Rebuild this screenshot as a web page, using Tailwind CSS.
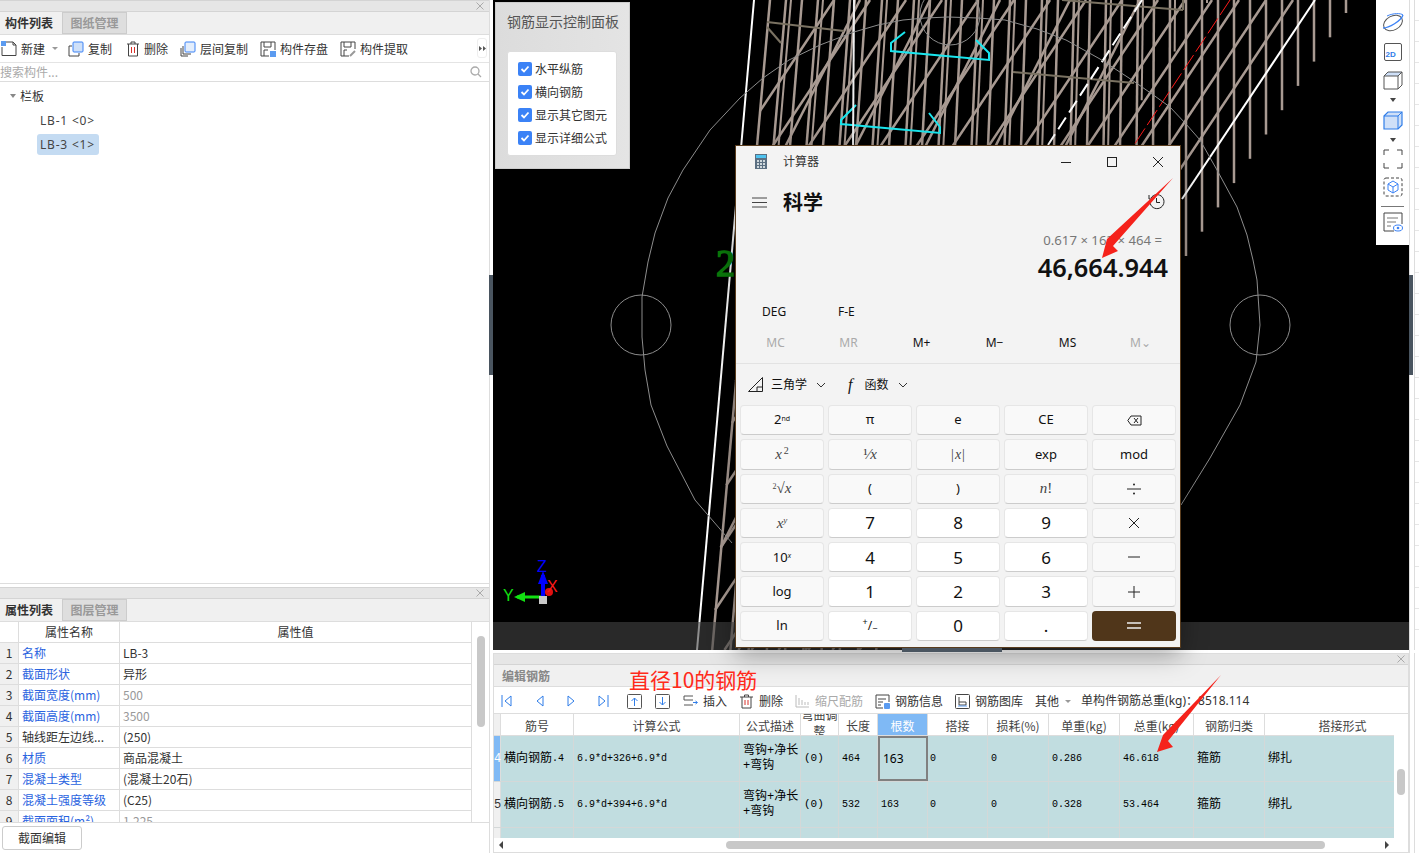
<!DOCTYPE html>
<html lang="zh">
<head>
  <meta charset="UTF-8" />
  <meta name="viewport" content="width=device-width, initial-scale=1.0" />
  <title>钢筋</title>
  <script src="https://cdn.jsdelivr.net/npm/@tailwindcss/browser@4"></script>
</head>
<body class="bg-white text-[#333] text-[12px] font-['Noto_Sans_CJK_SC',sans-serif]">
<div class="relative w-[1419px] h-[853px] overflow-hidden flex">

  <!-- left column -->
  <div class="w-[490px] h-full flex flex-col shrink-0 border-r border-[#ddd]">
    <div class="h-[584px] flex flex-col border-b border-[#ddd] shrink-0">
      <div class="h-[12px] bg-[#e6e6e6] border-y border-[#d4d4d4] flex items-center justify-end pr-[5px] shrink-0"><svg width="8" height="8" viewBox="0 0 8 8" fill="none"><path d="M0.500 0.500L7.500 7.500M7.500 0.500L0.500 7.500" stroke="#aaa"/></svg></div>
      <div class="h-[23px] bg-[#f0f0f0] border-b border-[#ddd] flex shrink-0">
        <div class="w-[62px] flex items-center pl-[5px] font-bold text-[12px]">构件列表</div>
        <div class="w-[65px] flex items-center justify-center bg-[#dedede] border border-[#ccc] text-[#999] font-bold">图纸管理</div>
      </div>
      <div class="h-[28px] border-b border-[#e4e4e4] flex items-center relative shrink-0">
        <svg class="ml-px" width="16" height="16" viewBox="0 0 16 16" fill="none"><path d="M1 6V14.500H15V4L12 1H5" stroke="#444"/><path d="M12 1V4H15" stroke="#444"/><rect x="0" y="0" width="5" height="5" fill="#5b9bf0"/></svg>
        <span class="ml-[4px]">新建</span>
        <span class="ml-[7px] w-0 h-0 border-x-[3px] border-x-transparent border-t-[3px] border-t-[#999]"></span>
        <svg class="ml-[10px]" width="16" height="16" viewBox="0 0 16 16" fill="none"><path d="M4 5H1V15H11V12" stroke="#444"/><rect x="5" y="1" width="10" height="10" rx="1" fill="#cfe0f8" stroke="#3b82f6"/></svg>
        <span class="ml-[4px]">复制</span>
        <svg class="ml-[14px]" width="14" height="16" viewBox="0 0 14 16" fill="none"><path d="M1 3H13M5 3V1H9V3M2.500 3V15H11.500V3" stroke="#444"/><path d="M5.500 6V12M8.500 6V12" stroke="#d8312a"/></svg>
        <span class="ml-[4px]">删除</span>
        <svg class="ml-[12px]" width="16" height="16" viewBox="0 0 16 16" fill="none"><path d="M1 7V15H8M3 5V13H11" stroke="#444"/><rect x="5" y="1" width="10" height="10" rx="1" fill="#e4eefc" stroke="#3b82f6"/></svg>
        <span class="ml-[4px]">层间复制</span>
        <svg class="ml-[12px]" width="16" height="16" viewBox="0 0 16 16" fill="none"><path d="M9 15H1V1H15V9" stroke="#444"/><path d="M4 1V6H11V1M4 15V9H8" stroke="#444"/><rect x="10" y="10" width="6" height="6" fill="#5b9bf0"/></svg>
        <span class="ml-[4px]">构件存盘</span>
        <svg class="ml-[12px]" width="16" height="16" viewBox="0 0 16 16" fill="none"><path d="M9 15H1V1H15V8" stroke="#444"/><path d="M4 1V6H11V1M4 15V9H7" stroke="#444"/><path d="M10 15L15 10" stroke="#999" stroke-width="2"/></svg>
        <span class="ml-[4px]">构件提取</span>
        <span class="absolute right-[2px] top-[3px] w-[10px] h-[20px] border border-[#eee] rounded-[3px] flex items-center justify-center"><svg width="7" height="5" viewBox="0 0 7 5"><path d="M0 0L3 2.500L0 5ZM4 0L7 2.500L4 5Z" fill="#555"/></svg></span>
      </div>
      <div class="h-[19px] border-b border-[#ddd] flex items-center justify-between pr-[7px] text-[#aaa] shrink-0">
        <span>搜索构件...</span>
        <svg width="12" height="12" viewBox="0 0 12 12" fill="none"><circle cx="5" cy="5" r="4" stroke="#aaa" stroke-width="1.300"/><path d="M8 8L11 11" stroke="#aaa" stroke-width="1.300"/></svg>
      </div>
      <div class="flex-1 pt-[3px]">
        <div class="h-[21px] flex items-center pl-[10px]">
          <span class="w-0 h-0 border-x-[3px] border-x-transparent border-t-[4px] border-t-[#888]"></span>
          <span class="ml-[4px]">栏板</span>
        </div>
        <div class="h-[24px] mt-[3px] flex items-center pl-[40px] font-['Noto_Sans',sans-serif] tracking-[0.8px] text-[#444]">LB-1 &lt;0&gt;</div>
        <div class="ml-[37px] w-[62px] h-[21px] mt-[1px] bg-[#c4dbf2] rounded-[3px] flex items-center pl-[3px] font-['Noto_Sans',sans-serif] tracking-[0.8px] text-[#444]">LB-3 &lt;1&gt;</div>
      </div>
    </div>

    <div class="mt-[3px] h-[236px] flex flex-col border-b border-[#ddd] shrink-0 overflow-hidden">
      <div class="h-[12px] bg-[#e6e6e6] border-y border-[#d4d4d4] flex items-center justify-end pr-[5px] shrink-0"><svg width="8" height="8" viewBox="0 0 8 8" fill="none"><path d="M0.500 0.500L7.500 7.500M7.500 0.500L0.500 7.500" stroke="#aaa"/></svg></div>
      <div class="h-[23px] bg-[#f0f0f0] border-b border-[#ddd] flex shrink-0">
        <div class="w-[62px] flex items-center pl-[5px] font-bold">属性列表</div>
        <div class="w-[65px] flex items-center justify-center bg-[#dedede] border border-[#ccc] text-[#999] font-bold">图层管理</div>
      </div>
      <div class="flex flex-1 min-h-0 overflow-hidden">
        <div class="w-[472px] border-r border-[#ddd] leading-[20px]">
          <div class="flex h-[21px] border-b border-[#ddd]"><div class="w-[19px] border-r border-[#ddd]"></div><div class="w-[101px] border-r border-[#ddd] text-center">属性名称</div><div class="flex-1 text-center">属性值</div></div>
          <div class="flex h-[21px] border-b border-[#ddd]"><div class="w-[19px] border-r border-[#ddd] bg-[#f0f0f0] text-center">1</div><div class="w-[101px] border-r border-[#ddd] pl-[3px] text-[#2a63e0]">名称</div><div class="flex-1 pl-[3px]">LB-3</div></div>
          <div class="flex h-[21px] border-b border-[#ddd]"><div class="w-[19px] border-r border-[#ddd] bg-[#f0f0f0] text-center">2</div><div class="w-[101px] border-r border-[#ddd] pl-[3px] text-[#2a63e0]">截面形状</div><div class="flex-1 pl-[3px]">异形</div></div>
          <div class="flex h-[21px] border-b border-[#ddd]"><div class="w-[19px] border-r border-[#ddd] bg-[#f0f0f0] text-center">3</div><div class="w-[101px] border-r border-[#ddd] pl-[3px] text-[#2a63e0]">截面宽度(mm)</div><div class="flex-1 pl-[3px] text-[#999]">500</div></div>
          <div class="flex h-[21px] border-b border-[#ddd]"><div class="w-[19px] border-r border-[#ddd] bg-[#f0f0f0] text-center">4</div><div class="w-[101px] border-r border-[#ddd] pl-[3px] text-[#2a63e0]">截面高度(mm)</div><div class="flex-1 pl-[3px] text-[#999]">3500</div></div>
          <div class="flex h-[21px] border-b border-[#ddd]"><div class="w-[19px] border-r border-[#ddd] bg-[#f0f0f0] text-center">5</div><div class="w-[101px] border-r border-[#ddd] pl-[3px]">轴线距左边线...</div><div class="flex-1 pl-[3px]">(250)</div></div>
          <div class="flex h-[21px] border-b border-[#ddd]"><div class="w-[19px] border-r border-[#ddd] bg-[#f0f0f0] text-center">6</div><div class="w-[101px] border-r border-[#ddd] pl-[3px] text-[#2a63e0]">材质</div><div class="flex-1 pl-[3px]">商品混凝土</div></div>
          <div class="flex h-[21px] border-b border-[#ddd]"><div class="w-[19px] border-r border-[#ddd] bg-[#f0f0f0] text-center">7</div><div class="w-[101px] border-r border-[#ddd] pl-[3px] text-[#2a63e0]">混凝土类型</div><div class="flex-1 pl-[3px]">(混凝土20石)</div></div>
          <div class="flex h-[21px] border-b border-[#ddd]"><div class="w-[19px] border-r border-[#ddd] bg-[#f0f0f0] text-center">8</div><div class="w-[101px] border-r border-[#ddd] pl-[3px] text-[#2a63e0]">混凝土强度等级</div><div class="flex-1 pl-[3px]">(C25)</div></div>
          <div class="flex h-[21px] border-b border-[#ddd]"><div class="w-[19px] border-r border-[#ddd] bg-[#f0f0f0] text-center">9</div><div class="w-[101px] border-r border-[#ddd] pl-[3px] text-[#2a63e0]">截面面积(m²)</div><div class="flex-1 pl-[3px] text-[#999]">1.225</div></div>
        </div>
        <div class="flex-1 pt-[14px] pl-[5px]"><div class="w-[8px] h-[91px] bg-[#c8c8c8] rounded-[4px]"></div></div>
      </div>
    </div>
    <div class="pl-[2px] pt-[3px]">
      <div class="w-[80px] h-[24px] border border-[#ccc] rounded-[3px] flex items-center justify-center">截面编辑</div>
    </div>
  </div>

  <!-- middle column -->
  <div class="w-[919px] h-full flex flex-col pl-[3px] shrink-0">
    <div class="relative h-[650px] w-[916px] bg-black overflow-hidden shrink-0">
      <svg id="scene" class="absolute left-0 top-0" width="916" height="650" viewBox="493 0 916 650" fill="none"></svg>
      <div class="absolute left-0 bottom-0 w-full h-[28px] bg-[#444]/60"></div>

      <!-- rebar control panel -->
      <div class="absolute left-[2px] top-[2px] w-[135px] h-[167px] bg-gradient-to-r from-[#dcdcdc] to-[#e4e4e4] border border-[#ccc] px-[11px]">
        <div class="mt-[8px] text-[14px] leading-[20px] text-[#555] whitespace-nowrap">钢筋显示控制面板</div>
        <div class="mt-[20px] w-[110px] h-[105px] bg-white border border-[#ddd] rounded-[3px] pl-[10px] pt-[10px] flex flex-col gap-[9px]">
          <div class="flex items-center h-[14px] gap-[3px]"><span class="w-[14px] h-[14px] rounded-[2px] bg-[#3b82f6] flex items-center justify-center"><svg width="10" height="10" viewBox="0 0 10 10" fill="none"><path d="M1.500 5L4 7.500L8.500 2.500" stroke="white" stroke-width="1.800"/></svg></span><span>水平纵筋</span></div>
          <div class="flex items-center h-[14px] gap-[3px]"><span class="w-[14px] h-[14px] rounded-[2px] bg-[#3b82f6] flex items-center justify-center"><svg width="10" height="10" viewBox="0 0 10 10" fill="none"><path d="M1.500 5L4 7.500L8.500 2.500" stroke="white" stroke-width="1.800"/></svg></span><span>横向钢筋</span></div>
          <div class="flex items-center h-[14px] gap-[3px]"><span class="w-[14px] h-[14px] rounded-[2px] bg-[#3b82f6] flex items-center justify-center"><svg width="10" height="10" viewBox="0 0 10 10" fill="none"><path d="M1.500 5L4 7.500L8.500 2.500" stroke="white" stroke-width="1.800"/></svg></span><span>显示其它图元</span></div>
          <div class="flex items-center h-[14px] gap-[3px]"><span class="w-[14px] h-[14px] rounded-[2px] bg-[#3b82f6] flex items-center justify-center"><svg width="10" height="10" viewBox="0 0 10 10" fill="none"><path d="M1.500 5L4 7.500L8.500 2.500" stroke="white" stroke-width="1.800"/></svg></span><span>显示详细公式</span></div>
        </div>
      </div>

      <!-- view toolbar -->
      <div class="absolute right-0 top-0 w-[33px] h-[245px] bg-white flex flex-col items-center pt-[13px]">
        <svg width="24" height="20" viewBox="0 0 24 20" fill="none"><ellipse cx="12" cy="10" rx="10" ry="7" transform="rotate(-28 12 10)" stroke="#555"/><path d="M2 15C8 15 20 8 22 2" stroke="#3b82f6" stroke-width="1.300"/><path d="M6 3C12 0 20 0 22 2" stroke="#3b82f6"/></svg>
        <div class="mt-[10px] w-[18px] h-[18px] border border-[#555] rounded-[2px] flex items-end pl-[1px] text-[8px] leading-[11px] font-bold font-['Liberation_Sans',sans-serif] text-[#2f7de8]">2D</div>
        <svg class="mt-[9px]" width="20" height="20" viewBox="0 0 20 20" fill="none"><path d="M1 6L5 2H19L15 6Z" fill="#cfe0f8" stroke="#555"/><path d="M1 6V19H15V6M15 19L19 15V2" stroke="#555"/></svg>
        <span class="mt-[8px] w-0 h-0 border-x-[3px] border-x-transparent border-t-[4px] border-t-[#444]"></span>
        <svg class="mt-[8px]" width="20" height="20" viewBox="0 0 20 20" fill="none"><path d="M1 6L5 2H19V15L15 19H1Z" fill="#cfe0f8" stroke="#2f7de8" stroke-width="1.200"/><path d="M1 6H15V19M15 6L19 2" stroke="#2f7de8"/></svg>
        <span class="mt-[8px] w-0 h-0 border-x-[3px] border-x-transparent border-t-[4px] border-t-[#444]"></span>
        <svg class="mt-[7px]" width="20" height="20" viewBox="0 0 20 20" fill="none"><path d="M1 6V1H6M14 1H19V6M19 14V19H14M6 19H1V14" stroke="#444"/></svg>
        <svg class="mt-[8px]" width="20" height="20" viewBox="0 0 20 20" fill="none"><rect x="1" y="1" width="18" height="18" rx="2" stroke="#444" stroke-dasharray="3 2"/><path d="M10 4L15 7V13L10 16L5 13V7ZM5 7L10 10L15 7M10 10V16" stroke="#3b82f6"/></svg>
        <div class="mt-[9px] w-[23px] h-px bg-[#777] shrink-0"></div>
        <svg class="mt-[5px]" width="20" height="20" viewBox="0 0 20 20" fill="none"><path d="M11 19H1V1H19V12" stroke="#444"/><path d="M4 6H15M4 10H13M4 14H8" stroke="#777"/><ellipse cx="15" cy="16" rx="4.500" ry="3" fill="white" stroke="#3b82f6"/><circle cx="15" cy="16" r="1.300" fill="#3b82f6"/></svg>
      </div>
    </div>

    <!-- rebar editor -->
    <div class="mt-[3px] h-[200px] w-[916px] border border-[#ddd] flex flex-col shrink-0 overflow-hidden">
      <div class="h-[11px] bg-[#e6e6e6] border-b border-[#d4d4d4] flex items-center justify-end pr-[3px] shrink-0"><svg width="8" height="8" viewBox="0 0 8 8" fill="none"><path d="M0.500 0.500L7.500 7.500M7.500 0.500L0.500 7.500" stroke="#aaa"/></svg></div>
      <div class="h-[22px] bg-[#f0f0f0] border-b border-[#ddd] flex items-center pl-[8px] text-[#888] font-bold shrink-0">编辑钢筋</div>
      <div class="h-[27px] pt-[2px] border-b border-[#ddd] flex items-center shrink-0">
        <svg class="ml-[7px]" width="12" height="14" viewBox="0 0 12 14" fill="none"><path d="M1 1V13M10 2L4 7L10 12Z" stroke="#2f7de8"/></svg>
        <svg class="ml-[23px]" width="9" height="14" viewBox="0 0 9 14" fill="none"><path d="M7 2L1 7L7 12Z" stroke="#2f7de8"/></svg>
        <svg class="ml-[21px]" width="9" height="14" viewBox="0 0 9 14" fill="none"><path d="M2 2L8 7L2 12Z" stroke="#2f7de8"/></svg>
        <svg class="ml-[22px]" width="12" height="14" viewBox="0 0 12 14" fill="none"><path d="M11 1V13M2 2L8 7L2 12Z" stroke="#2f7de8"/></svg>
        <svg class="ml-[18px]" width="15" height="15" viewBox="0 0 15 15" fill="none"><rect x="0.500" y="0.500" width="14" height="14" rx="1" stroke="#555"/><path d="M7.500 12V4M4.500 7L7.500 4L10.500 7" stroke="#2f7de8"/></svg>
        <svg class="ml-[13px]" width="15" height="15" viewBox="0 0 15 15" fill="none"><rect x="0.500" y="0.500" width="14" height="14" rx="1" stroke="#555"/><path d="M7.500 3V11M4.500 8L7.500 11L10.500 8" stroke="#2f7de8"/></svg>
        <svg class="ml-[13px]" width="15" height="12" viewBox="0 0 15 12" fill="none"><path d="M10 1H1V5H10M1 10H10" stroke="#555"/><path d="M10 7.500H14M12.500 6L14.500 7.500L12.500 9" stroke="#2f7de8"/></svg>
        <span class="ml-[5px]">插入</span>
        <svg class="ml-[13px]" width="13" height="15" viewBox="0 0 13 15" fill="none"><path d="M0 3H13M4.500 3V1H8.500V3M2 3V14H11V3" stroke="#444"/><path d="M5 6V11M8 6V11" stroke="#d8312a"/></svg>
        <span class="ml-[6px]">删除</span>
        <svg class="ml-[12px]" width="14" height="14" viewBox="0 0 14 14" fill="none"><path d="M1 1V13H14M4 4V11M7 6V11M10 8V11M13 8V11" stroke="#bbb"/></svg>
        <span class="ml-[6px] text-[#aaa]">缩尺配筋</span>
        <svg class="ml-[12px]" width="15" height="15" viewBox="0 0 15 15" fill="none"><path d="M8 14H1V1H14V8" stroke="#444"/><path d="M3 5H11M3 8H8M3 11H6" stroke="#444"/><rect x="9" y="9" width="6" height="6" rx="1" fill="#5b9bf0"/></svg>
        <span class="ml-[5px]">钢筋信息</span>
        <svg class="ml-[12px]" width="15" height="15" viewBox="0 0 15 15" fill="none"><rect x="0.500" y="0.500" width="14" height="14" rx="1" stroke="#444"/><path d="M4 3V8H11V11H4V8" stroke="#444"/><path d="M3 12H12" stroke="#5b9bf0"/></svg>
        <span class="ml-[5px]">钢筋图库</span>
        <span class="ml-[12px]">其他</span>
        <span class="ml-[6px] w-0 h-0 border-x-[3px] border-x-transparent border-t-[3px] border-t-[#999]"></span>
        <span class="ml-[10px] font-['Noto_Sans','Noto_Sans_CJK_SC',sans-serif]">单构件钢筋总重(kg)：8518.114</span>
      </div>

      <div class="relative flex-1 min-h-0 flex">
        <div class="w-[900px] overflow-hidden">
          <div class="flex h-[22px] border-b border-[#ddd] leading-[23px] text-center text-[#444]">
            <div class="w-[7px] border-r border-[#ddd] bg-[#f0f0f0]"></div>
            <div class="w-[73px] border-r border-[#ddd]">筋号</div>
            <div class="w-[166px] border-r border-[#ddd]">计算公式</div>
            <div class="w-[61px] border-r border-[#ddd]">公式描述</div>
            <div class="w-[38px] h-[21px] border-r border-[#ddd] leading-[16px] overflow-hidden"><div class="-mt-[7px]">弯曲调整</div></div>
            <div class="w-[39px] border-r border-[#ddd]">长度</div>
            <div class="w-[50px] border-r border-[#ddd] bg-[#7fb9f5] text-white">根数</div>
            <div class="w-[60px] border-r border-[#ddd]">搭接</div>
            <div class="w-[61px] border-r border-[#ddd]">损耗(%)</div>
            <div class="w-[71px] border-r border-[#ddd]">单重(kg)</div>
            <div class="w-[74px] border-r border-[#ddd]">总重(kg)</div>
            <div class="w-[71px] border-r border-[#ddd]">钢筋归类</div>
            <div class="flex-1 pl-[26px]">搭接形式</div>
          </div>
          <div class="flex h-[46px] border-b border-[#d4d8d8] items-stretch bg-[#c1dde0] text-black text-[10px] font-['Liberation_Mono','Noto_Sans_CJK_SC',monospace]">
            <div class="w-[7px] border-r border-[#ddd] bg-[#7fb9f5] text-white text-[12px] flex items-center">4</div>
            <div class="w-[73px] border-r border-[#d4d8d8] pl-[3px] flex items-center"><span class="text-[12px]">横向钢筋</span>.4</div>
            <div class="w-[166px] border-r border-[#d4d8d8] pl-[3px] flex items-center">6.9*d+326+6.9*d</div>
            <div class="w-[61px] border-r border-[#d4d8d8] pl-[3px] flex items-center text-[12px] leading-[15px]">弯钩+净长<br>+弯钩</div>
            <div class="w-[38px] border-r border-[#d4d8d8] pl-[3px] flex items-center text-[11px]">(0)</div>
            <div class="w-[39px] border-r border-[#d4d8d8] pl-[3px] flex items-center">464</div>
            <div class="w-[50px] border-2 border-[#808080] pl-[3px] pt-[1px] flex items-center text-[12px] font-['Noto_Sans',sans-serif]">163</div>
            <div class="w-[60px] border-r border-[#d4d8d8] pl-[2px] flex items-center">0</div>
            <div class="w-[61px] border-r border-[#d4d8d8] pl-[3px] flex items-center">0</div>
            <div class="w-[71px] border-r border-[#d4d8d8] pl-[3px] flex items-center">0.286</div>
            <div class="w-[74px] border-r border-[#d4d8d8] pl-[3px] flex items-center">46.618</div>
            <div class="w-[71px] border-r border-[#d4d8d8] pl-[3px] flex items-center text-[12px]">箍筋</div>
            <div class="flex-1 pl-[3px] flex items-center text-[12px]">绑扎</div>
          </div>
          <div class="flex h-[46px] border-b border-[#d4d8d8] items-stretch bg-[#c1dde0] text-black text-[10px] font-['Liberation_Mono','Noto_Sans_CJK_SC',monospace]">
            <div class="w-[7px] border-r border-[#ddd] bg-[#f0f0f0] text-[#333] text-[12px] flex items-center">5</div>
            <div class="w-[73px] border-r border-[#d4d8d8] pl-[3px] flex items-center"><span class="text-[12px]">横向钢筋</span>.5</div>
            <div class="w-[166px] border-r border-[#d4d8d8] pl-[3px] flex items-center">6.9*d+394+6.9*d</div>
            <div class="w-[61px] border-r border-[#d4d8d8] pl-[3px] flex items-center text-[12px] leading-[15px]">弯钩+净长<br>+弯钩</div>
            <div class="w-[38px] border-r border-[#d4d8d8] pl-[3px] flex items-center text-[11px]">(0)</div>
            <div class="w-[39px] border-r border-[#d4d8d8] pl-[3px] flex items-center">532</div>
            <div class="w-[50px] border-r border-[#d4d8d8] pl-[3px] flex items-center">163</div>
            <div class="w-[60px] border-r border-[#d4d8d8] pl-[2px] flex items-center">0</div>
            <div class="w-[61px] border-r border-[#d4d8d8] pl-[3px] flex items-center">0</div>
            <div class="w-[71px] border-r border-[#d4d8d8] pl-[3px] flex items-center">0.328</div>
            <div class="w-[74px] border-r border-[#d4d8d8] pl-[3px] flex items-center">53.464</div>
            <div class="w-[71px] border-r border-[#d4d8d8] pl-[3px] flex items-center text-[12px]">箍筋</div>
            <div class="flex-1 pl-[3px] flex items-center text-[12px]">绑扎</div>
          </div>
          <div class="flex h-[10px] bg-[#c1dde0]">
            <div class="w-[7px] border-r border-[#ddd] bg-[#f0f0f0]"></div>
            <div class="w-[73px] border-r border-[#d4d8d8]"></div>
            <div class="w-[166px] border-r border-[#d4d8d8]"></div>
            <div class="w-[61px] border-r border-[#d4d8d8]"></div>
            <div class="w-[38px] border-r border-[#d4d8d8]"></div>
            <div class="w-[39px] border-r border-[#d4d8d8]"></div>
            <div class="w-[50px] border-r border-[#d4d8d8]"></div>
            <div class="w-[60px] border-r border-[#d4d8d8]"></div>
            <div class="w-[61px] border-r border-[#d4d8d8]"></div>
            <div class="w-[71px] border-r border-[#d4d8d8]"></div>
            <div class="w-[74px] border-r border-[#d4d8d8]"></div>
            <div class="w-[71px] border-r border-[#d4d8d8]"></div>
          </div>
          <div class="h-[14px] flex items-center relative">
            <span class="ml-[5px] w-0 h-0 border-y-[4px] border-y-transparent border-r-[4px] border-r-[#444]"></span>
            <div class="ml-[223px] w-[599px] h-[8px] bg-[#c8c8c8] rounded-[4px]"></div>
            <span class="ml-[60px] w-0 h-0 border-y-[4px] border-y-transparent border-l-[4px] border-l-[#444]"></span>
          </div>
        </div>
        <div class="flex-1 pl-[3px] pt-[55px]"><div class="w-[8px] h-[26px] bg-[#c8c8c8] rounded-[4px]"></div></div>
      </div>
    </div>
  </div>

  <!-- right strip -->
  <div class="flex-1 h-full border-l border-[#ddd] pl-[4px]">
    <div class="h-[650px] border-l border-[#ddd] bg-[repeating-linear-gradient(#fff_0,#fff_20px,#e6e6e6_20px,#e6e6e6_21px)]"></div>
    <div class="h-[200px] mt-[3px] border-l border-[#ddd]"></div>
  </div>

  <!-- calculator window -->
  <div class="absolute left-[735px] top-[145px] w-[446px] h-[503px] bg-[#f3f3f3] border border-[#5a3d1e] shadow-[0_6px_24px_rgba(0,0,0,0.35)] font-['Noto_Sans','Noto_Sans_CJK_SC',sans-serif] text-[#111] flex flex-col">
    <div class="h-[31px] flex items-center shrink-0 relative">
      <svg class="ml-[19px]" width="12" height="15" viewBox="0 0 12 15"><rect width="12" height="15" fill="#5b6f82"/><rect x="1" y="1" width="10" height="3" fill="#4fc3f0"/><path d="M2 6H4V8H2ZM5 6H7V8H5ZM8 6H10V8H8ZM2 9H4V11H2ZM5 9H7V11H5ZM8 9H10V11H8ZM2 12H4V14H2ZM5 12H7V14H5ZM8 12H10V14H8Z" fill="#cfd8dc"/></svg>
      <span class="ml-[16px] text-[12px] text-[#333]">计算器</span>
      <svg class="absolute left-[324px] top-[10px]" width="12" height="12" viewBox="0 0 12 12" fill="none"><path d="M1 6.500H11" stroke="#222"/></svg>
      <svg class="absolute left-[370px] top-[10px]" width="12" height="12" viewBox="0 0 12 12" fill="none"><rect x="1.500" y="1.500" width="9" height="9" stroke="#222"/></svg>
      <svg class="absolute left-[416px] top-[10px]" width="12" height="12" viewBox="0 0 12 12" fill="none"><path d="M1 1L11 11M11 1L1 11" stroke="#222"/></svg>
    </div>
    <div class="h-[50px] flex items-center shrink-0 relative">
      <svg class="ml-[16px]" width="15" height="11" viewBox="0 0 15 11" fill="none"><path d="M0 1H15M0 5.500H15M0 10H15" stroke="#444"/></svg>
      <span class="ml-[16px] text-[20px] font-bold font-['Noto_Sans_CJK_SC',sans-serif]">科学</span>
      <svg class="absolute left-[412px] top-[16px]" width="17" height="17" viewBox="0 0 17 17" fill="none"><path d="M3 5A7 7 0 1 1 2 9" stroke="#222"/><path d="M1 2V6H5M8.500 5V9.500H12" stroke="#222"/></svg>
    </div>
    <div class="h-[25px] pr-[18px] text-right text-[13.200px] leading-[27px] text-[#777] shrink-0">0.617 × 163 × 464 =</div>
    <div class="h-[31px] pr-[12px] text-right text-[25.400px] leading-[31px] font-semibold shrink-0">46,664.944</div>
    <div class="h-[40px] flex items-end pb-[2px] text-[12px] shrink-0">
      <span class="ml-[26px] w-[50px]">DEG</span><span class="ml-[26px]">F-E</span>
    </div>
    <div class="h-[39px] grid grid-cols-6 items-center text-center text-[12px] px-[3px] shrink-0">
      <span class="text-[#aaa]">MC</span><span class="text-[#aaa]">MR</span><span>M+</span><span>M−</span><span>MS</span><span class="text-[#aaa]">M⌄</span>
    </div>
    <div class="h-px mt-[1px] bg-[#e2e2e2] shrink-0"></div>
    <div class="h-[41px] flex items-center text-[12px] shrink-0">
      <svg class="ml-[12px]" width="15" height="15" viewBox="0 0 15 15" fill="none"><path d="M0.500 14.500L14.500 0.500V14.500Z" stroke="#222"/><path d="M9 14.500V10H14.500" stroke="#222"/></svg>
      <span class="ml-[8px]">三角学</span>
      <svg class="ml-[9px]" width="10" height="6" viewBox="0 0 10 6" fill="none"><path d="M1 1L5 5L9 1" stroke="#333"/></svg>
      <span class="ml-[22px] text-[16px] italic font-['Liberation_Serif',serif]">f</span>
      <span class="ml-[12px]">函数</span>
      <svg class="ml-[10px]" width="10" height="6" viewBox="0 0 10 6" fill="none"><path d="M1 1L5 5L9 1" stroke="#333"/></svg>
    </div>
    <div class="grid grid-cols-5 gap-[4px] px-[4px] h-[236px] grid-rows-7 text-[13px]">
      <button class="bg-[#f9f9f9] border border-[#e6e6e6] border-b-[#ccc] rounded-[4px]">2<sup class="text-[7px]">nd</sup></button>
      <button class="bg-[#f9f9f9] border border-[#e6e6e6] border-b-[#ccc] rounded-[4px]">π</button>
      <button class="bg-[#f9f9f9] border border-[#e6e6e6] border-b-[#ccc] rounded-[4px]">e</button>
      <button class="bg-[#f9f9f9] border border-[#e6e6e6] border-b-[#ccc] rounded-[4px]">CE</button>
      <button class="bg-[#f9f9f9] border border-[#e6e6e6] border-b-[#ccc] rounded-[4px] flex items-center justify-center"><svg width="15" height="11" viewBox="0 0 15 11" fill="none"><path d="M4 1H14V10H4L0.800 5.500Z" stroke="#222"/><path d="M7 3L11 8M11 3L7 8" stroke="#222"/></svg></button>

      <button class="bg-[#f9f9f9] border border-[#e6e6e6] border-b-[#ccc] rounded-[4px] font-['Liberation_Serif',serif] italic text-[15px] text-[#444]">x<sup class="ml-[2px] text-[10px] not-italic">2</sup></button>
      <button class="bg-[#f9f9f9] border border-[#e6e6e6] border-b-[#ccc] rounded-[4px] font-['Liberation_Serif',serif] text-[15px] text-[#444]">¹⁄<i>x</i></button>
      <button class="bg-[#f9f9f9] border border-[#e6e6e6] border-b-[#ccc] rounded-[4px] font-['Liberation_Serif',serif] text-[14px] text-[#444]">|<i class="mx-[1px]">x</i>|</button>
      <button class="bg-[#f9f9f9] border border-[#e6e6e6] border-b-[#ccc] rounded-[4px]">exp</button>
      <button class="bg-[#f9f9f9] border border-[#e6e6e6] border-b-[#ccc] rounded-[4px]">mod</button>

      <button class="bg-[#f9f9f9] border border-[#e6e6e6] border-b-[#ccc] rounded-[4px] font-['Liberation_Serif',serif] text-[15px] text-[#444]"><sup class="text-[8px]">2</sup>√<span class="italic">x</span></button>
      <button class="bg-[#f9f9f9] border border-[#e6e6e6] border-b-[#ccc] rounded-[4px]">(</button>
      <button class="bg-[#f9f9f9] border border-[#e6e6e6] border-b-[#ccc] rounded-[4px]">)</button>
      <button class="bg-[#f9f9f9] border border-[#e6e6e6] border-b-[#ccc] rounded-[4px] font-['Liberation_Serif',serif] text-[15px] text-[#444]"><i>n</i>!</button>
      <button class="bg-[#f9f9f9] border border-[#e6e6e6] border-b-[#ccc] rounded-[4px] flex items-center justify-center"><svg width="14" height="12" viewBox="0 0 14 12" fill="none"><path d="M0 6H14" stroke="#222"/><circle cx="7" cy="1.500" r="1" fill="#222"/><circle cx="7" cy="10.500" r="1" fill="#222"/></svg></button>

      <button class="bg-[#f9f9f9] border border-[#e6e6e6] border-b-[#ccc] rounded-[4px] font-['Liberation_Serif',serif] italic text-[15px] text-[#444]">x<sup class="text-[9px]">y</sup></button>
      <button class="bg-white border border-[#e6e6e6] border-b-[#ccc] rounded-[4px] text-[17px]">7</button>
      <button class="bg-white border border-[#e6e6e6] border-b-[#ccc] rounded-[4px] text-[17px]">8</button>
      <button class="bg-white border border-[#e6e6e6] border-b-[#ccc] rounded-[4px] text-[17px]">9</button>
      <button class="bg-[#f9f9f9] border border-[#e6e6e6] border-b-[#ccc] rounded-[4px] flex items-center justify-center"><svg width="12" height="12" viewBox="0 0 12 12" fill="none"><path d="M1 1L11 11M11 1L1 11" stroke="#222"/></svg></button>

      <button class="bg-[#f9f9f9] border border-[#e6e6e6] border-b-[#ccc] rounded-[4px]">10<sup class="text-[7px] italic">x</sup></button>
      <button class="bg-white border border-[#e6e6e6] border-b-[#ccc] rounded-[4px] text-[17px]">4</button>
      <button class="bg-white border border-[#e6e6e6] border-b-[#ccc] rounded-[4px] text-[17px]">5</button>
      <button class="bg-white border border-[#e6e6e6] border-b-[#ccc] rounded-[4px] text-[17px]">6</button>
      <button class="bg-[#f9f9f9] border border-[#e6e6e6] border-b-[#ccc] rounded-[4px] flex items-center justify-center"><svg width="12" height="12" viewBox="0 0 12 12" fill="none"><path d="M0 6H12" stroke="#222"/></svg></button>

      <button class="bg-[#f9f9f9] border border-[#e6e6e6] border-b-[#ccc] rounded-[4px]">log</button>
      <button class="bg-white border border-[#e6e6e6] border-b-[#ccc] rounded-[4px] text-[17px]">1</button>
      <button class="bg-white border border-[#e6e6e6] border-b-[#ccc] rounded-[4px] text-[17px]">2</button>
      <button class="bg-white border border-[#e6e6e6] border-b-[#ccc] rounded-[4px] text-[17px]">3</button>
      <button class="bg-[#f9f9f9] border border-[#e6e6e6] border-b-[#ccc] rounded-[4px] flex items-center justify-center"><svg width="12" height="12" viewBox="0 0 12 12" fill="none"><path d="M0 6H12M6 0V12" stroke="#222"/></svg></button>

      <button class="bg-[#f9f9f9] border border-[#e6e6e6] border-b-[#ccc] rounded-[4px]">ln</button>
      <button class="bg-white border border-[#e6e6e6] border-b-[#ccc] rounded-[4px] text-[12px]"><sup>+</sup>/<sub>−</sub></button>
      <button class="bg-white border border-[#e6e6e6] border-b-[#ccc] rounded-[4px] text-[17px]">0</button>
      <button class="bg-white border border-[#e6e6e6] border-b-[#ccc] rounded-[4px] text-[17px]">.</button>
      <button class="bg-[#50361a] rounded-[4px] flex items-center justify-center"><svg width="14" height="7" viewBox="0 0 14 7" fill="none"><path d="M0 1H14M0 6H14" stroke="#eee" stroke-width="1.300"/></svg></button>
    </div>
  </div>

  <!-- side and bottom splitter handles -->
  <div class="absolute left-[489px] top-[275px] w-[4px] h-[100px] bg-[#4a5560]"></div>
  <div class="absolute left-[1409px] top-[275px] w-[4px] h-[100px] bg-[#4a5560]"></div>
  <div class="absolute left-[902px] top-[648px] w-[100px] h-[4px] bg-[#4a5560]"></div>

  <!-- annotations -->
  <div class="absolute left-[629px] top-[668px] text-[21px] leading-[22px] text-[#ff2a1a] font-['Noto_Sans_CJK_SC',sans-serif]">直径10的钢筋</div>
  <svg class="absolute left-0 top-0 pointer-events-none" width="1419" height="853" viewBox="0 0 1419 853">
    <polygon points="1173,178 1107,239 1102,258 1118,251 1113,246" fill="#f5221b"/>
    <polygon points="1221,675 1163,735 1157,752 1173,747 1168,741" fill="#f5221b"/>
  </svg>
</div>

<script>
  // rebar view: lines are computed so the picture stays a few lines of data
  const scene = document.getElementById('scene');
  const NS = 'http://www.w3.org/2000/svg';
  function line(x1, y1, x2, y2, stroke, width, dash) {
    const l = document.createElementNS(NS, 'line');
    l.setAttribute('x1', x1); l.setAttribute('y1', y1);
    l.setAttribute('x2', x2); l.setAttribute('y2', y2);
    l.setAttribute('stroke', stroke); l.setAttribute('stroke-width', width);
    if (dash) l.setAttribute('stroke-dasharray', dash);
    scene.appendChild(l);
  }
  function poly(points, stroke, width) {
    const p = document.createElementNS(NS, 'polyline');
    p.setAttribute('points', points); p.setAttribute('stroke', stroke);
    p.setAttribute('stroke-width', width); p.setAttribute('fill', 'none');
    scene.appendChild(p);
  }
  function circle(cx, cy, r) {
    const c = document.createElementNS(NS, 'circle');
    c.setAttribute('cx', cx); c.setAttribute('cy', cy); c.setAttribute('r', r);
    c.setAttribute('stroke', '#8c8c8c'); c.setAttribute('fill', 'none');
    scene.appendChild(c);
  }
  const rebar = '#a89a92';

  // near vertical bars, two layers, stepped ends at the right
  for (let n = 0; n < 37; n++) {
    const x0 = 1346 - 16 * n, end = Math.min(650, 13 + 24.3 * n);
    const k = x0 < 1185 ? 0.09 * (1185 - x0) / 420 : 0;
    line(x0, 0, x0 - k * end, end, rebar, 2.5);
  }
  for (let n = 0; n < 28; n += 2) {
    const x0 = 1207 - 16 * n, end = Math.min(650, 3 + 24.3 * n);
    const k = 0.09 * (1207 - x0) / 440;
    line(x0, 0, x0 - k * end, end, rebar, 2);
  }
  // diagonal bars
  for (let c = 1293; c > 800; c -= (c > 1180 ? 27 : 36)) {
    const y = Math.min(650, (c - 770) / 0.577);
    line(c, 0, c - 0.667 * y, y, rebar, 2.5);
  }
  for (let c = 1140; c > 820; c -= 70) {
    const y = Math.min(650, (c - 770) / 0.42);
    line(c, 0, c - 0.51 * y, y, rebar, 2.5);
  }

  // stirrups
  line(767, 22, 844, 31, '#7a7262', 2);
  line(767, 27, 781, 43, '#7a7262', 2);
  line(1013, 72, 1134, 83, '#7a7262', 2);
  line(1062, 0, 1183, 10, '#7a7262', 2);
  line(1183, 0, 1183, 10, '#7a7262', 2);
  poly('905,32 891,43 891,51 989,60 989,53 976,40', '#19e6ee', 2);
  poly('856,105 841,120 841,124 940,133 940,127 929,113', '#19e6ee', 2);

  // white and red edges
  line(754, 0, 697, 650, '#fff', 2);
  line(854, 0, 853, 150, '#eee', 2);
  line(1315, 0, 1182, 199, '#fff', 2);
  line(1142, 0, 1048, 145, '#fff', 2, '14 6');
  line(1230, 0, 1134, 145, '#ff1a1a', 1, '18 4');

  // outline circles
  poly('732,543 695,500 667,446 651,405 645,370 642,337 642,297 648,262 655,233 668,198 683,170 710,130 740,98 763,78 789,60 820,45 854,32 878,25 903,20 925,18 948,17 978,18 1005,20 1037,29 1066,40 1100,59 1132,80 1152,94 1170,107 1186,124 1200,140 1217,170 1237,207 1247,235 1253,260 1257,280 1258,295 1260,325 1256,362 1240,405 1210,458 1181,505', '#8c8c8c', 1);
  circle(641, 325, 30);
  circle(1260, 325, 30);
  circle(950, 15, 30);

  // green label behind the calculator
  const label = document.createElementNS(NS, 'text');
  label.setAttribute('x', 716); label.setAttribute('y', 276);
  label.setAttribute('fill', '#0b7a0b'); label.setAttribute('stroke', '#0b7a0b');
  label.setAttribute('stroke-width', 1.5); label.setAttribute('font-size', 38);
  label.setAttribute('font-family', 'Liberation Serif');
  label.textContent = '2f';
  scene.appendChild(label);

  // axis gizmo
  line(543, 597, 517, 597, '#12e012', 3);
  line(543, 597, 543, 575, '#0000ff', 4);
  const gizmo = [
    ['polygon', '514,597 525,592 525,602', '#12e012'],
    ['polygon', '543,571 538,584 548,584', '#0000ff']
  ];
  gizmo.forEach(([tag, pts, fill]) => {
    const g = document.createElementNS(NS, tag);
    g.setAttribute('points', pts); g.setAttribute('fill', fill);
    scene.appendChild(g);
  });
  const ball = document.createElementNS(NS, 'circle');
  ball.setAttribute('cx', 549); ball.setAttribute('cy', 592); ball.setAttribute('r', 4);
  ball.setAttribute('fill', '#e01010');
  scene.appendChild(ball);
  const cube = document.createElementNS(NS, 'rect');
  cube.setAttribute('x', 539); cube.setAttribute('y', 596);
  cube.setAttribute('width', 8); cube.setAttribute('height', 8);
  cube.setAttribute('fill', '#c9c9c9');
  scene.appendChild(cube);
  [['Y', 503, 601, '#12e012'], ['Z', 537, 572, '#0000ff'], ['X', 547, 592, '#ff1a1a']].forEach(([t, x, y, fill]) => {
    const a = document.createElementNS(NS, 'text');
    a.setAttribute('x', x); a.setAttribute('y', y);
    a.setAttribute('fill', fill); a.setAttribute('font-size', 16);
    a.setAttribute('font-family', 'Liberation Sans');
    a.textContent = t;
    scene.appendChild(a);
  });
</script>
</body>
</html>
